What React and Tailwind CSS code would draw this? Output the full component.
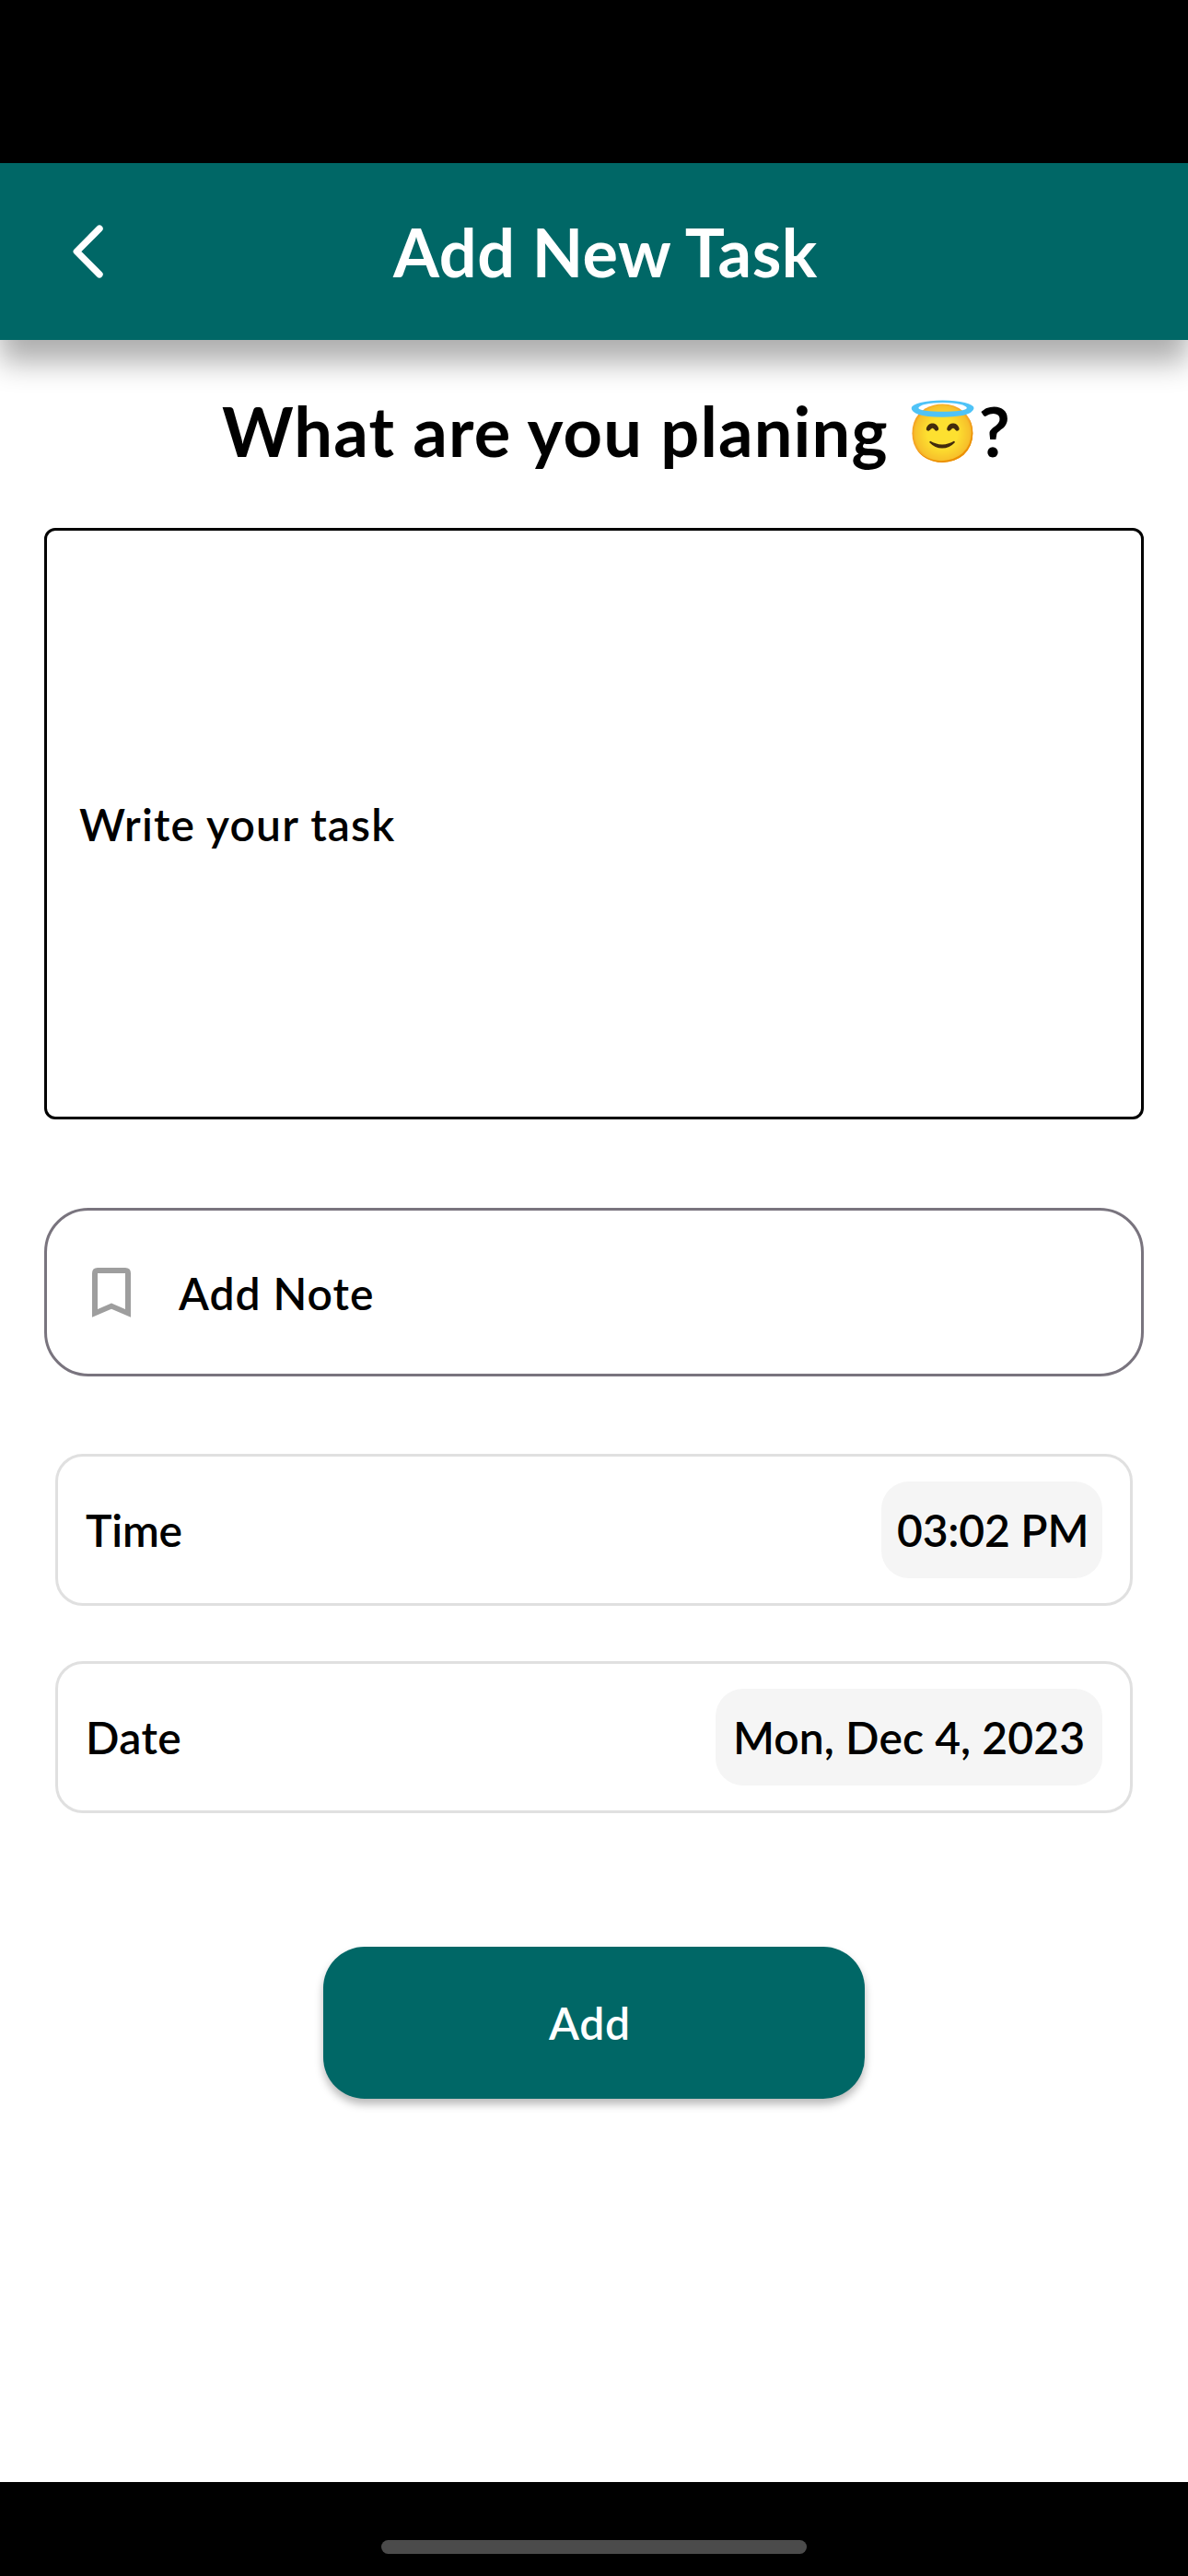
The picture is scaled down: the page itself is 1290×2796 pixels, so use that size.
function BackIcon() {
  return (
    <svg className="h-[60px] w-[36px] shrink-0" viewBox="0 0 36 60" fill="none" stroke="#fff" strokeWidth="7.4" strokeLinecap="round" strokeLinejoin="round">
      <path d="M30 5.2 5.3 30 30 54.8" />
    </svg>
  );
}

function BookmarkIcon() {
  return (
    <svg className="h-[54px] w-[42px] shrink-0" viewBox="0 0 42 54" fill="#9e9e9e">
      <path fillRule="evenodd" d="M6 0H36Q42 0 42 6V53.7L21 44.7 0 53.7V6Q0 0 6 0ZM6 6V45L21 38.4 36 45V6Z" />
    </svg>
  );
}

function Row({ label, labelClass, value, chipClass }) {
  return (
    <div className="flex h-[165px] items-center justify-between rounded-[30px] border-3 border-[#e0e0e0] pr-[30px] pl-[30px]">
      <span className={labelClass}>{label}</span>
      <span className={chipClass}>{value}</span>
    </div>
  );
}

export default function App() {
  return (
    <div className="flex h-[2796px] w-[1290px] flex-col overflow-hidden bg-white font-['Lato',sans-serif] text-[48px] leading-[58px] font-semibold text-black">
      <div className="h-[177px] shrink-0 bg-black" />
      <header className="grid h-[192px] shrink-0 grid-cols-[427px_1fr] items-center bg-[#006766] shadow-[0_24px_30px_rgba(0,0,0,0.32)]">
        <div className="pl-[78px]">
          <BackIcon />
        </div>
        <h1 className="pb-px text-[72px] leading-[86px] font-bold tracking-[0.55px] text-white">Add New Task</h1>
      </header>

      <main className="flex flex-1 flex-col px-[48px] pt-[59px]">
        <h2 className="flex h-[80px] items-center pl-[193px] text-[74px] leading-[80px] font-bold whitespace-pre">
          <span className="tracking-[1.15px]">What are you planing</span>
          <span className="ml-[23px] flex w-[72px] justify-center text-[62px] leading-[80px]">😇</span>
          <span className="ml-[3px]">?</span>
        </h2>

        <div className="mt-[65px] flex h-[642px] shrink-0 items-center rounded-[12px] border-3 border-black pt-[2px] pl-[35px] tracking-[1.15px]">
          Write your task
        </div>

        <div className="mt-[96px] flex h-[183px] shrink-0 items-center gap-[52px] rounded-[48px] border-3 border-[#79747e] pl-[49px]">
          <BookmarkIcon />
          <span className="pt-[2px] tracking-[1px]">Add Note</span>
        </div>

        <section className="mt-[84px] flex flex-col gap-[60px] px-[12px]">
          <Row
            label="Time"
            labelClass="tracking-[-0.2px]"
            value="03:02 PM"
            chipClass="flex h-[105px] w-[240px] items-center rounded-[30px] bg-[#f5f5f5] pl-[17px] tracking-[-0.2px] whitespace-nowrap"
          />
          <Row
            label="Date"
            labelClass="tracking-[0.4px]"
            value="Mon, Dec 4, 2023"
            chipClass="flex h-[105px] w-[420px] items-center rounded-[30px] bg-[#f5f5f5] pl-[19px] tracking-[0.1px] whitespace-nowrap"
          />
        </section>

        <button className="mt-[145px] ml-[303px] flex h-[165px] w-[588px] shrink-0 items-center rounded-[45px] bg-[#006766] pl-[245px] font-semibold tracking-[0.8px] text-white shadow-[0_6px_10px_rgba(0,0,0,0.28)]">
          Add
        </button>
      </main>

      <footer className="flex h-[102px] shrink-0 justify-center bg-black pt-[63px]">
        <div className="h-[15px] w-[462px] rounded-full bg-[#4b4b4b]" />
      </footer>
    </div>
  );
}
